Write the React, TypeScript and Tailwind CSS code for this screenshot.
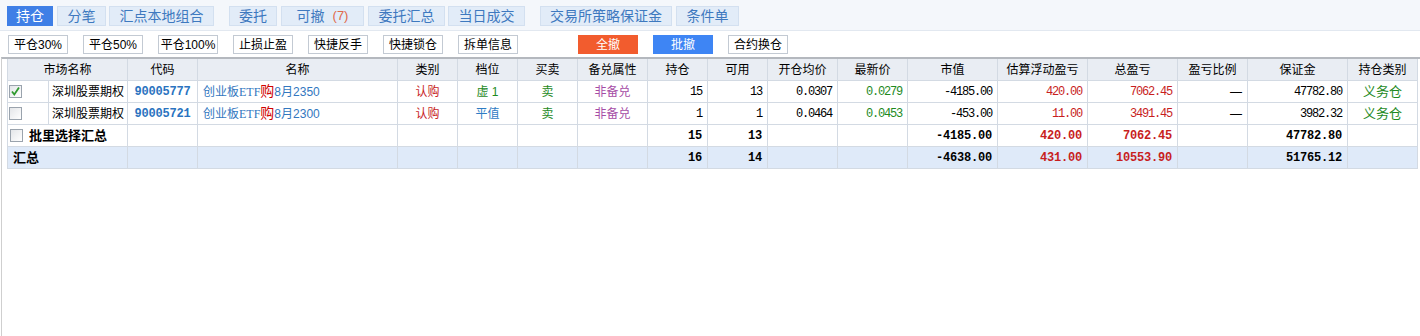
import React from "react";

const CJK = "font-['Liberation_Sans','Noto_Sans_CJK_SC',sans-serif]";
const NUM = "font-['Liberation_Mono','Noto_Sans_CJK_SC',monospace] text-[12px] tracking-[-1.2px]";
const NUMB = "font-['Liberation_Mono','Noto_Sans_CJK_SC',monospace] text-[12px] font-bold tracking-[-0.2px]";

const cols = "grid-cols-[41px_79px_70px_200px_60px_60px_60px_70px_60px_60px_70px_70px_90px_90px_90px_70px_100px_70px]";

function Tab({ w, active, children, cls = "" }: { w: string; active?: boolean; children: React.ReactNode; cls?: string }) {
  return (
    <div
      className={`${w} h-[20px] flex items-center justify-center text-[14px] border ${
        active ? "bg-[#3f7fe6] border-[#3f7fe6] text-white" : "bg-[#e2ecf8] border-[#d3e0f0] text-[#3e79bf]"
      } ${cls}`}
    >
      {children}
    </div>
  );
}

function Btn({ children, cls = "", variant }: { children: React.ReactNode; cls?: string; variant?: "orange" | "blue" }) {
  const v =
    variant === "orange"
      ? "bg-[#f25c2e] border-[#f25c2e] text-white"
      : variant === "blue"
      ? "bg-[#3e85f4] border-[#3e85f4] text-white"
      : "bg-white border-[#c3cad3] text-black";
  return (
    <div className={`w-[60px] h-[19px] flex items-center justify-center text-[12px] border ${v} ${cls}`}>{children}</div>
  );
}

function Check({ checked }: { checked?: boolean }) {
  return (
    <div className="w-[13px] h-[13px] border border-[#9aa3ad] bg-gradient-to-br from-[#e4e6e9] to-white flex items-center justify-center">
      {checked && (
        <svg width="11" height="11" viewBox="0 0 11 11">
          <path d="M2 5.5 L4.3 8.5 L9 1.5" stroke="#2f9a2f" strokeWidth="1.8" fill="none" />
        </svg>
      )}
    </div>
  );
}

function C({
  children,
  cls = "",
  align = "center",
}: {
  children?: React.ReactNode;
  cls?: string;
  align?: "center" | "right" | "left";
}) {
  const a = align === "center" ? "justify-center" : align === "right" ? "justify-end pr-[5px]" : "justify-start pl-[5px]";
  return <div className={`h-[22px] border-r border-b border-[#d3dae3] flex items-center whitespace-nowrap ${a} ${cls}`}>{children}</div>;
}

const headers = ["代码", "名称", "类别", "档位", "买卖", "备兑属性", "持仓", "可用", "开仓均价", "最新价", "市值", "估算浮动盈亏", "总盈亏", "盈亏比例", "保证金", "持仓类别"];

type Row = {
  checked: boolean;
  code: string;
  price: string;
  level: string;
  levelCls: string;
  pos: string;
  avail: string;
  open: string;
  last: string;
  mv: string;
  fl: string;
  tot: string;
  margin: string;
};

const rows: Row[] = [
  { checked: true, code: "90005777", price: "2350", level: "虚 1", levelCls: "text-[#1e8a1e]", pos: "15", avail: "13", open: "0.0307", last: "0.0279", mv: "-4185.00", fl: "420.00", tot: "7062.45", margin: "47782.80" },
  { checked: false, code: "90005721", price: "2300", level: "平值", levelCls: "text-[#2f7cc4]", pos: "1", avail: "1", open: "0.0464", last: "0.0453", mv: "-453.00", fl: "11.00", tot: "3491.45", margin: "3982.32" },
];

export default function App() {
  return (
    <div className={`w-[1420px] h-[336px] bg-white text-[12px] text-black overflow-hidden ${CJK}`}>
      {/* Tabs */}
      <div className="h-[31px] bg-[#f4f7fb] border-b border-[#e2e8f0] flex items-start pt-[6px] pl-[7px]">
        <Tab w="w-[46px]" active>持仓</Tab>
        <Tab w="w-[49px]" cls="ml-[4px]">分笔</Tab>
        <Tab w="w-[105px]" cls="ml-[3px]">汇点本地组合</Tab>
        <Tab w="w-[48px]" cls="ml-[15px]">委托</Tab>
        <Tab w="w-[83px]" cls="ml-[4px]">
          可撤<span className="ml-[8px] text-[#e0694a] text-[13px]">(7)</span>
        </Tab>
        <Tab w="w-[77px]" cls="ml-[4px]">委托汇总</Tab>
        <Tab w="w-[77px]" cls="ml-[3px]">当日成交</Tab>
        <Tab w="w-[132px]" cls="ml-[15px]">交易所策略保证金</Tab>
        <Tab w="w-[63px]" cls="ml-[4px]">条件单</Tab>
      </div>

      {/* Toolbar */}
      <div className="h-[26px] flex items-start pt-[4px] pl-[8px] gap-[15px]">
        <Btn>平仓30%</Btn>
        <Btn>平仓50%</Btn>
        <Btn>平仓100%</Btn>
        <Btn>止损止盈</Btn>
        <Btn>快捷反手</Btn>
        <Btn>快捷锁仓</Btn>
        <Btn>拆单信息</Btn>
        <Btn variant="orange" cls="ml-[45px]">全撤</Btn>
        <Btn variant="blue">批撤</Btn>
        <Btn>合约换仓</Btn>
      </div>

      {/* Table area */}
      <div className="h-[279px] ml-[1px] border-l border-[#cfcfcf] border-t-2 border-t-[#b4b8be] flex">
        <div className="ml-[5px]">
          <div className={`grid ${cols} w-[1411px] border-l border-[#d3dae3]`}>
            {/* header */}
            <C cls="col-span-2 bg-[#e9edf3]">市场名称</C>
            {headers.map((h) => (
              <C key={h} cls="bg-[#e9edf3]">
                {h}
              </C>
            ))}

            {rows.map((r) => (
              <React.Fragment key={r.code}>
                <C align="left" cls="!pl-[1px]">
                  <Check checked={r.checked} />
                </C>
                <C>深圳股票期权</C>
                <C cls={`text-[#2a73c0] ${NUMB}`}>{r.code}</C>
                <C align="left" cls="text-[#3277c0]">
                  创业板<span className="font-['Liberation_Serif',serif] text-[12px]">ETF</span>
                  <span className="text-[#d00000] text-[14px]">购</span>8月{r.price}
                </C>
                <C cls="text-[#c81e1e]">认购</C>
                <C cls={r.levelCls}>{r.level}</C>
                <C cls="text-[#1e8a1e]">卖</C>
                <C cls="text-[#a64ca6]">非备兑</C>
                <C align="right" cls={NUM}>{r.pos}</C>
                <C align="right" cls={NUM}>{r.avail}</C>
                <C align="right" cls={NUM}>{r.open}</C>
                <C align="right" cls={`${NUM} text-[#1e8a1e]`}>{r.last}</C>
                <C align="right" cls={NUM}>{r.mv}</C>
                <C align="right" cls={`${NUM} text-[#c81e1e]`}>{r.fl}</C>
                <C align="right" cls={`${NUM} text-[#c81e1e]`}>{r.tot}</C>
                <C align="right">—</C>
                <C align="right" cls={NUM}>{r.margin}</C>
                <C cls="text-[#1e8a1e] text-[13px]">义务仓</C>
              </React.Fragment>
            ))}

            {/* 批里选择汇总 */}
            <C align="left" cls="col-span-2 !pl-[2px] gap-[6px]">
              <Check />
              <span className="font-bold text-[13px]">批里选择汇总</span>
            </C>
            <C />
            <C />
            <C />
            <C />
            <C />
            <C />
            <C align="right" cls={NUMB}>15</C>
            <C align="right" cls={NUMB}>13</C>
            <C />
            <C />
            <C align="right" cls={NUMB}>-4185.00</C>
            <C align="right" cls={`${NUMB} text-[#c81e1e]`}>420.00</C>
            <C align="right" cls={`${NUMB} text-[#c81e1e]`}>7062.45</C>
            <C />
            <C align="right" cls={NUMB}>47782.80</C>
            <C />

            {/* 汇总 */}
            <C align="left" cls="col-span-2 bg-[#dfeaf9]">
              <span className="font-bold text-[13px]">汇总</span>
            </C>
            <C cls="bg-[#dfeaf9]" />
            <C cls="bg-[#dfeaf9]" />
            <C cls="bg-[#dfeaf9]" />
            <C cls="bg-[#dfeaf9]" />
            <C cls="bg-[#dfeaf9]" />
            <C cls="bg-[#dfeaf9]" />
            <C align="right" cls={`${NUMB} bg-[#dfeaf9]`}>16</C>
            <C align="right" cls={`${NUMB} bg-[#dfeaf9]`}>14</C>
            <C cls="bg-[#dfeaf9]" />
            <C cls="bg-[#dfeaf9]" />
            <C align="right" cls={`${NUMB} bg-[#dfeaf9]`}>-4638.00</C>
            <C align="right" cls={`${NUMB} text-[#c81e1e] bg-[#dfeaf9]`}>431.00</C>
            <C align="right" cls={`${NUMB} text-[#c81e1e] bg-[#dfeaf9]`}>10553.90</C>
            <C cls="bg-[#dfeaf9]" />
            <C align="right" cls={`${NUMB} bg-[#dfeaf9]`}>51765.12</C>
            <C cls="bg-[#dfeaf9]" />
          </div>
        </div>
      </div>
    </div>
  );
}
